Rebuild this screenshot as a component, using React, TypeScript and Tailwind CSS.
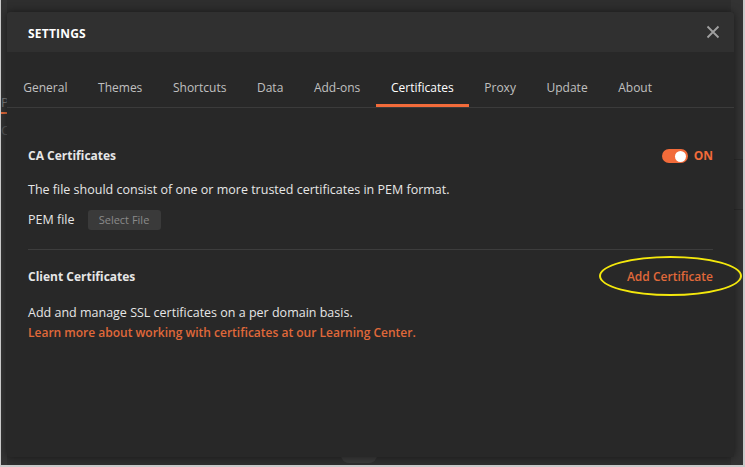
import React from "react";

const tabs = ["General", "Themes", "Shortcuts", "Data", "Add-ons", "Certificates", "Proxy", "Update", "About"];

export default function App() {
  return (
    <div
      className="relative w-[745px] h-[467px] overflow-hidden bg-[#2e2e2e] border-l border-r-2 border-b-2 border-[#c9c9c9]"
      style={{ fontFamily: '"Open Sans", "Noto Sans", sans-serif' }}
    >
      {/* faint background app */}
      <div className="absolute inset-0 flex">
        <div className="w-[6px] h-full bg-[#333] flex flex-col">
          <div className="h-[96px]" />
          <div className="text-[13px] text-[#777] leading-none">P</div>
          <div className="mt-[3px] h-[2px] w-[6px] bg-[#e0693a]" />
          <div className="mt-[10px] text-[13px] text-[#555] leading-none">C</div>
        </div>
        <div className="flex-1" />
        <div className="w-[12px] h-full bg-[#333] flex flex-col">
          <div className="h-[160px] border-b border-[#2a2a2a]" />
          <div className="h-[50px] border-b border-[#2a2a2a]" />
        </div>
      </div>
      <div className="absolute left-[340px] bottom-[2px] w-[36px] h-[8px] rounded-b-full bg-[#3a3a3a]" />

      <div className="relative pt-[12px] pl-[6px]">
        <div className="w-[727px] h-[445px] bg-[#282828] rounded-[3px] shadow-[0_0_8px_rgba(0,0,0,0.5)] flex flex-col overflow-hidden">
          {/* header */}
          <div className="h-[40px] bg-[#303030] flex items-center justify-between pl-[21px] pr-[14px] pt-[3px]">
            <span className="text-[12px] font-bold text-white tracking-[0.2px]">SETTINGS</span>
            <svg width="14" height="14" viewBox="0 0 14 14" className="mt-[-3px]">
              <path d="M1.5 1.5 L12.5 12.5 M12.5 1.5 L1.5 12.5" stroke="#a0a0a0" strokeWidth="1.8" />
            </svg>
          </div>
          {/* tabs */}
          <div className="h-[56px] flex pl-[1px] border-b border-[#3b3b3b]">
            {tabs.map((t) => {
              const active = t === "Certificates";
              return (
                <div key={t} className="px-[15.3px] pt-[27px] h-full flex flex-col items-center">
                  <span className={"text-[12px] leading-[18px] " + (active ? "text-white" : "text-[#c0c0c0]")}>{t}</span>
                  <div className="flex-1" />
                  <div className={"h-[3px] w-[calc(100%+30px)] " + (active ? "bg-[#f26b3a]" : "bg-transparent")} />
                </div>
              );
            })}
          </div>
          {/* content */}
          <div className="px-[21px] flex flex-col">
            <div className="mt-[38px] flex items-center justify-between h-[20px]">
              <span className="text-[12px] font-bold text-[#e6e6e6]">CA Certificates</span>
              <div className="flex items-center gap-[6px]">
                <div className="w-[26px] h-[14px] rounded-full bg-[#f26b3a] flex items-center justify-end pr-[2px]">
                  <div className="w-[11px] h-[11px] rounded-full bg-white" />
                </div>
                <span className="text-[12px] font-bold text-[#f26b3a]">ON</span>
              </div>
            </div>
            <div className="mt-[14px] text-[12.5px] leading-[20px] text-[#e6e6e6]">
              The file should consist of one or more trusted certificates in PEM format.
            </div>
            <div className="mt-[10px] flex items-center h-[20px]">
              <span className="text-[12.5px] text-[#e6e6e6]">PEM file</span>
              <div className="ml-[13px] w-[73px] h-[20px] rounded-[3px] bg-[#3a3a3a] flex items-center justify-center text-[11px] text-[#8a8a8a]">
                Select File
              </div>
            </div>
            <div className="mt-[19px] h-px bg-[#3d3d3d]" />
            <div className="mt-[17px] flex items-center justify-between h-[20px]">
              <span className="text-[12px] font-bold text-[#e6e6e6]">Client Certificates</span>
              <span className="text-[12px] font-semibold text-[#e0693a]">Add Certificate</span>
            </div>
            <div className="mt-[16px] text-[12.5px] leading-[20px] text-[#e6e6e6]">
              Add and manage SSL certificates on a per domain basis.
            </div>
            <div className="text-[12px] leading-[20px] font-semibold text-[#e0693a]">
              Learn more about working with certificates at our Learning Center.
            </div>
          </div>
        </div>
      </div>

      {/* yellow annotation ellipse */}
      <div className="absolute left-[598px] top-[256px] w-[143px] h-[40px] rounded-[50%] border-2 border-[#f4e80c]" />
    </div>
  );
}
